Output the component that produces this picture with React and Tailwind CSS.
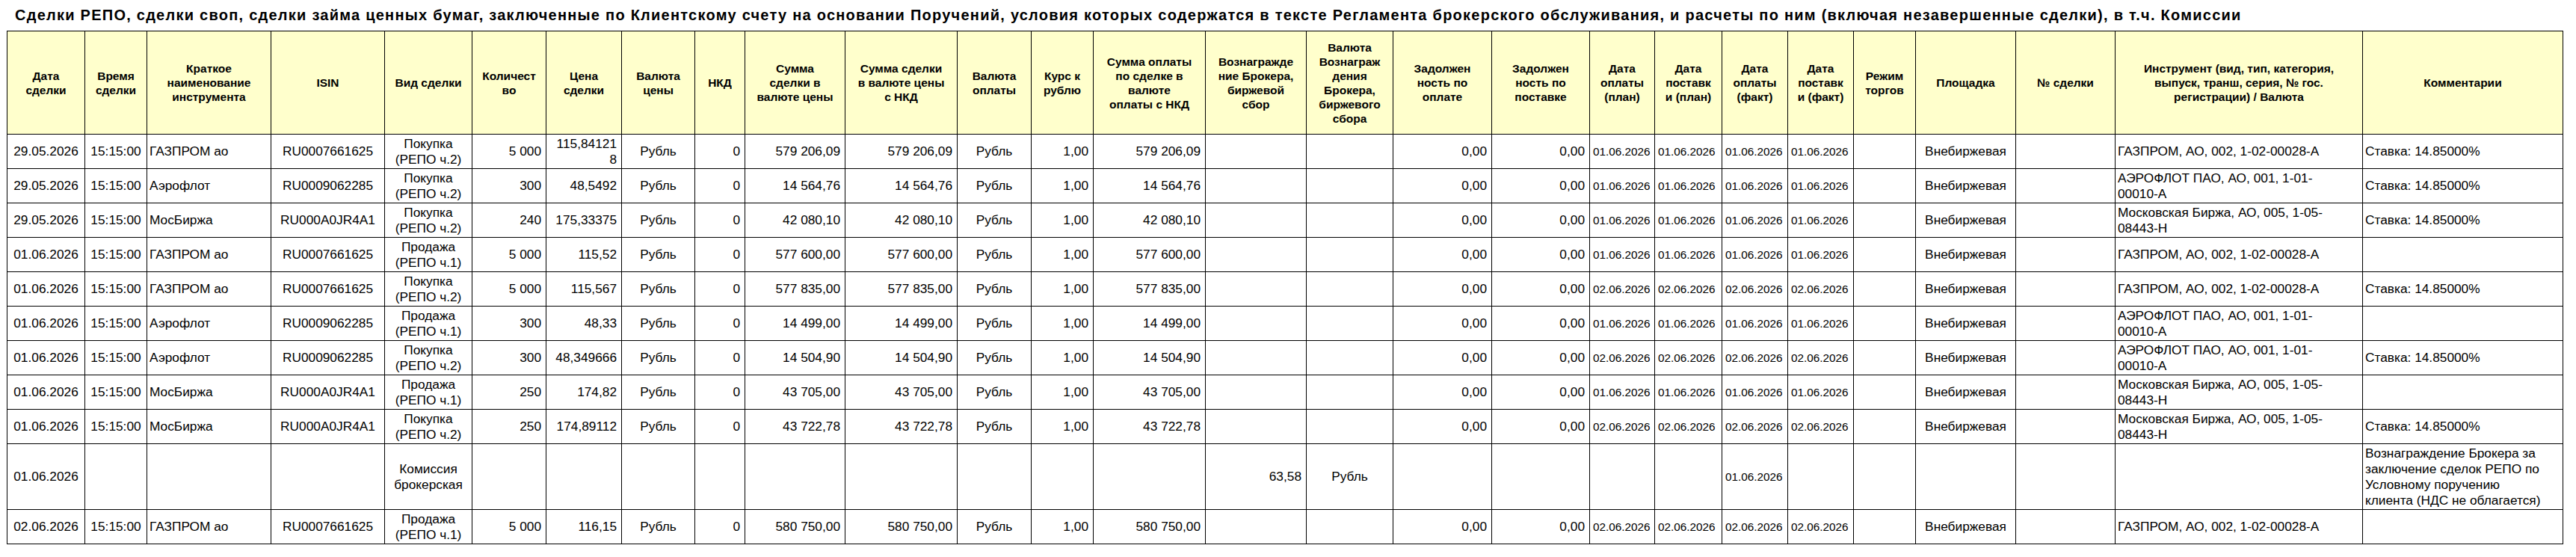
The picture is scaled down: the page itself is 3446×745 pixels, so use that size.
import React from 'react';

// column widths in px, measured off the report
const COLS = [104, 83, 166, 152, 117, 99, 101, 98, 67, 134, 150, 99, 83, 150, 135, 116, 132, 131, 87, 90, 88, 88, 83, 134, 133, 331, 268];

const HEADERS = [
  ['Дата', 'сделки'],
  ['Время', 'сделки'],
  ['Краткое', 'наименование', 'инструмента'],
  ['ISIN'],
  ['Вид сделки'],
  ['Количест', 'во'],
  ['Цена', 'сделки'],
  ['Валюта', 'цены'],
  ['НКД'],
  ['Сумма', 'сделки в', 'валюте цены'],
  ['Сумма сделки', 'в валюте цены', 'с НКД'],
  ['Валюта', 'оплаты'],
  ['Курс к', 'рублю'],
  ['Сумма оплаты', 'по сделке в', 'валюте', 'оплаты с НКД'],
  ['Вознагражде', 'ние Брокера,', 'биржевой', 'сбор'],
  ['Валюта', 'Вознаграж', 'дения', 'Брокера,', 'биржевого', 'сбора'],
  ['Задолжен', 'ность по', 'оплате'],
  ['Задолжен', 'ность по', 'поставке'],
  ['Дата', 'оплаты', '(план)'],
  ['Дата', 'поставк', 'и (план)'],
  ['Дата', 'оплаты', '(факт)'],
  ['Дата', 'поставк', 'и (факт)'],
  ['Режим', 'торгов'],
  ['Площадка'],
  ['№ сделки'],
  ['Инструмент (вид, тип, категория,', 'выпуск, транш, серия, № гос.', 'регистрации) / Валюта'],
  ['Комментарии'],
];

// c = center, l = left, r = right, d = small date (left)
const ALIGN = ['c', 'c', 'l', 'c', 'c', 'r', 'r', 'c', 'r', 'r', 'r', 'c', 'r', 'r', 'r', 'c', 'r', 'r', 'd', 'd', 'd', 'd', 'c', 'c', 'c', 'l', 'l'];

const GAZ = 'ГАЗПРОМ, АО, 002, 1-02-00028-А';
const AFL = 'АЭРОФЛОТ ПАО, АО, 001, 1-01-\n00010-А';
const MOEX = 'Московская Биржа, АО, 005, 1-05-\n08443-Н';
const RATE = 'Ставка: 14.85000%';
const BUY = 'Покупка\n(РЕПО ч.2)';
const SELL = 'Продажа\n(РЕПО ч.1)';

function deal(date, name, isin, kind, qty, price, sum, d, instr, comment) {
  return [date, '15:15:00', name, isin, kind, qty, price, 'Рубль', '0', sum, sum, 'Рубль', '1,00', sum, '', '', '0,00', '0,00', d, d, d, d, '', 'Внебиржевая', '', instr, comment];
}

const ROWS = [
  deal('29.05.2026', 'ГАЗПРОМ ао', 'RU0007661625', BUY, '5 000', '115,84121\n8', '579 206,09', '01.06.2026', GAZ, RATE),
  deal('29.05.2026', 'Аэрофлот', 'RU0009062285', BUY, '300', '48,5492', '14 564,76', '01.06.2026', AFL, RATE),
  deal('29.05.2026', 'МосБиржа', 'RU000A0JR4A1', BUY, '240', '175,33375', '42 080,10', '01.06.2026', MOEX, RATE),
  deal('01.06.2026', 'ГАЗПРОМ ао', 'RU0007661625', SELL, '5 000', '115,52', '577 600,00', '01.06.2026', GAZ, ''),
  deal('01.06.2026', 'ГАЗПРОМ ао', 'RU0007661625', BUY, '5 000', '115,567', '577 835,00', '02.06.2026', GAZ, RATE),
  deal('01.06.2026', 'Аэрофлот', 'RU0009062285', SELL, '300', '48,33', '14 499,00', '01.06.2026', AFL, ''),
  deal('01.06.2026', 'Аэрофлот', 'RU0009062285', BUY, '300', '48,349666', '14 504,90', '02.06.2026', AFL, RATE),
  deal('01.06.2026', 'МосБиржа', 'RU000A0JR4A1', SELL, '250', '174,82', '43 705,00', '01.06.2026', MOEX, ''),
  deal('01.06.2026', 'МосБиржа', 'RU000A0JR4A1', BUY, '250', '174,89112', '43 722,78', '02.06.2026', MOEX, RATE),
  [
    '01.06.2026', '', '', '', 'Комиссия\nброкерская', '', '', '', '', '', '', '', '', '', '63,58', 'Рубль', '', '', '', '', '01.06.2026', '', '', '', '', '',
    'Вознаграждение Брокера за\nзаключение сделок РЕПО по\nУсловному поручению\nклиента (НДС не облагается)',
  ],
  deal('02.06.2026', 'ГАЗПРОМ ао', 'RU0007661625', SELL, '5 000', '116,15', '580 750,00', '02.06.2026', GAZ, ''),
];

const cellCls = {
  c: 'text-center px-[3px] text-[17.3px]',
  l: 'text-left pl-[3px] pr-[2px] text-[17.3px]',
  r: 'text-right pl-[2px] pr-[6px] text-[17.3px]',
  d: 'text-left pl-[4px] pr-0 text-[15.3px]',
};

export default function App() {
  return (
    <div className="min-h-screen bg-white text-black font-['Liberation_Sans',Arial,sans-serif]">
      <div className="pl-[9px] pt-[9px]">
        <h1 className="pl-[11px] text-[20px] leading-[23px] font-bold tracking-[1.25px] whitespace-nowrap">
          Сделки РЕПО, сделки своп, сделки займа ценных бумаг, заключенные по Клиентскому счету на основании Поручений, условия которых содержатся в тексте Регламента брокерского обслуживания, и расчеты по ним (включая незавершенные сделки), в т.ч. Комиссии
        </h1>
        <table className="mt-[9px] table-fixed border-collapse border border-black w-[3420px]">
          <colgroup>
            {COLS.map((w, i) => (
              <col key={i} style={{ width: w }} />
            ))}
          </colgroup>
          <thead>
            <tr className="h-[138px] bg-[#ffffcc]">
              {HEADERS.map((lines, i) => (
                <th key={i} className="border border-black px-[2px] align-middle text-center font-bold text-[15.5px] leading-[19px]">
                  {lines.map((l, j) => (
                    <div key={j} className="whitespace-nowrap">{l}</div>
                  ))}
                </th>
              ))}
            </tr>
          </thead>
          <tbody>
            {ROWS.map((row, r) => (
              <tr key={r} className={r === 9 ? 'h-[88px]' : 'h-[46px]'}>
                {row.map((v, i) => (
                  <td
                    key={i}
                    className={`border border-black align-middle leading-[21px] whitespace-pre-line ${cellCls[ALIGN[i]]}`}
                  >
                    {v}
                  </td>
                ))}
              </tr>
            ))}
          </tbody>
        </table>
      </div>
    </div>
  );
}
